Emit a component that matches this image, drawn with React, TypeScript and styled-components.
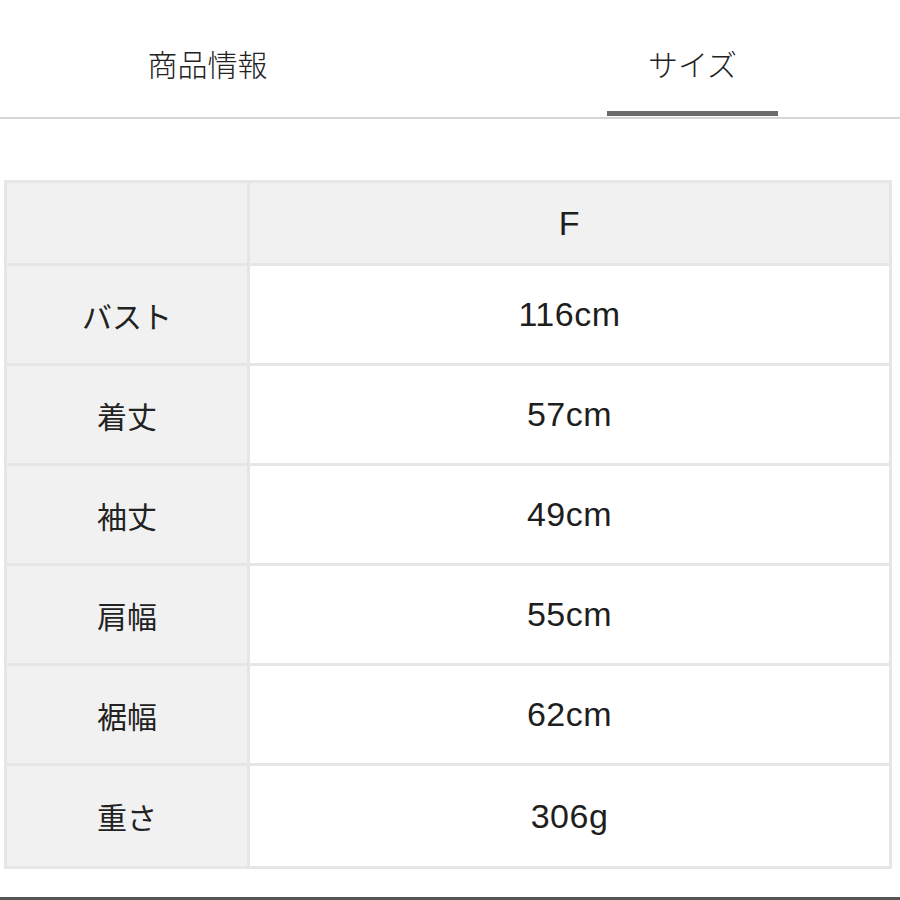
import styled, { createGlobalStyle } from "styled-components";

const GlobalStyle = createGlobalStyle`
  body {
    margin: 0;
    background: #fff;
    font-family: "Liberation Sans", "Noto Sans CJK JP", sans-serif;
    color: #222;
  }
`;

const Page = styled.div`
  width: 900px;
  height: 900px;
  overflow: hidden;
  display: flex;
  flex-direction: column;
`;

const TabBar = styled.div`
  height: 119px;
  box-sizing: border-box;
  display: flex;
  justify-content: space-between;
  padding: 0 122px 0 122px;
  border-bottom: 2px solid #d6d6d6;
`;

const Tab = styled.div<{ $active?: boolean }>`
  width: 171px;
  display: flex;
  align-items: center;
  justify-content: center;
  padding-top: 14px;
  font-family: "Noto Sans CJK JP", sans-serif;
  font-size: 30px;
  font-weight: 300;
  color: #222;
  border-bottom: 5px solid ${(p) => (p.$active ? "#6b6b6b" : "transparent")};
  margin-bottom: 1px;
`;

const SizeTable = styled.table`
  margin: 61px 0 0 4px;
  width: 888px;
  border-collapse: collapse;
  table-layout: fixed;

  td {
    border: 3px solid #e6e6e6;
    text-align: center;
    vertical-align: middle;
    padding: 0;
  }
`;

const LabelCell = styled.td`
  width: 240px;
  background: #f1f1f1;
  font-family: "Noto Sans CJK JP", sans-serif;
  font-size: 30px;
  font-weight: 400;
`;

const ValueCell = styled.td<{ $head?: boolean }>`
  background: ${(p) => (p.$head ? "#f1f1f1" : "#fff")};
  font-size: 34px;
  letter-spacing: 0.5px;
  color: #1e1e1e;
`;

const Row = styled.tr<{ $h: number }>`
  height: ${(p) => p.$h}px;
`;

const Footer = styled.div`
  margin-top: auto;
  height: 3px;
  background: #555;
`;

const rows = [
  ["バスト", "116cm"],
  ["着丈", "57cm"],
  ["袖丈", "49cm"],
  ["肩幅", "55cm"],
  ["裾幅", "62cm"],
  ["重さ", "306g"],
];

export default function App() {
  return (
    <Page>
      <GlobalStyle />
      <TabBar>
        <Tab>商品情報</Tab>
        <Tab $active>サイズ</Tab>
      </TabBar>
      <SizeTable>
        <tbody>
          <Row $h={83}>
            <LabelCell />
            <ValueCell $head>F</ValueCell>
          </Row>
          {rows.map(([label, value], i) => (
            <Row key={label} $h={i === rows.length - 1 ? 103 : 100}>
              <LabelCell>{label}</LabelCell>
              <ValueCell>{value}</ValueCell>
            </Row>
          ))}
        </tbody>
      </SizeTable>
      <Footer />
    </Page>
  );
}
